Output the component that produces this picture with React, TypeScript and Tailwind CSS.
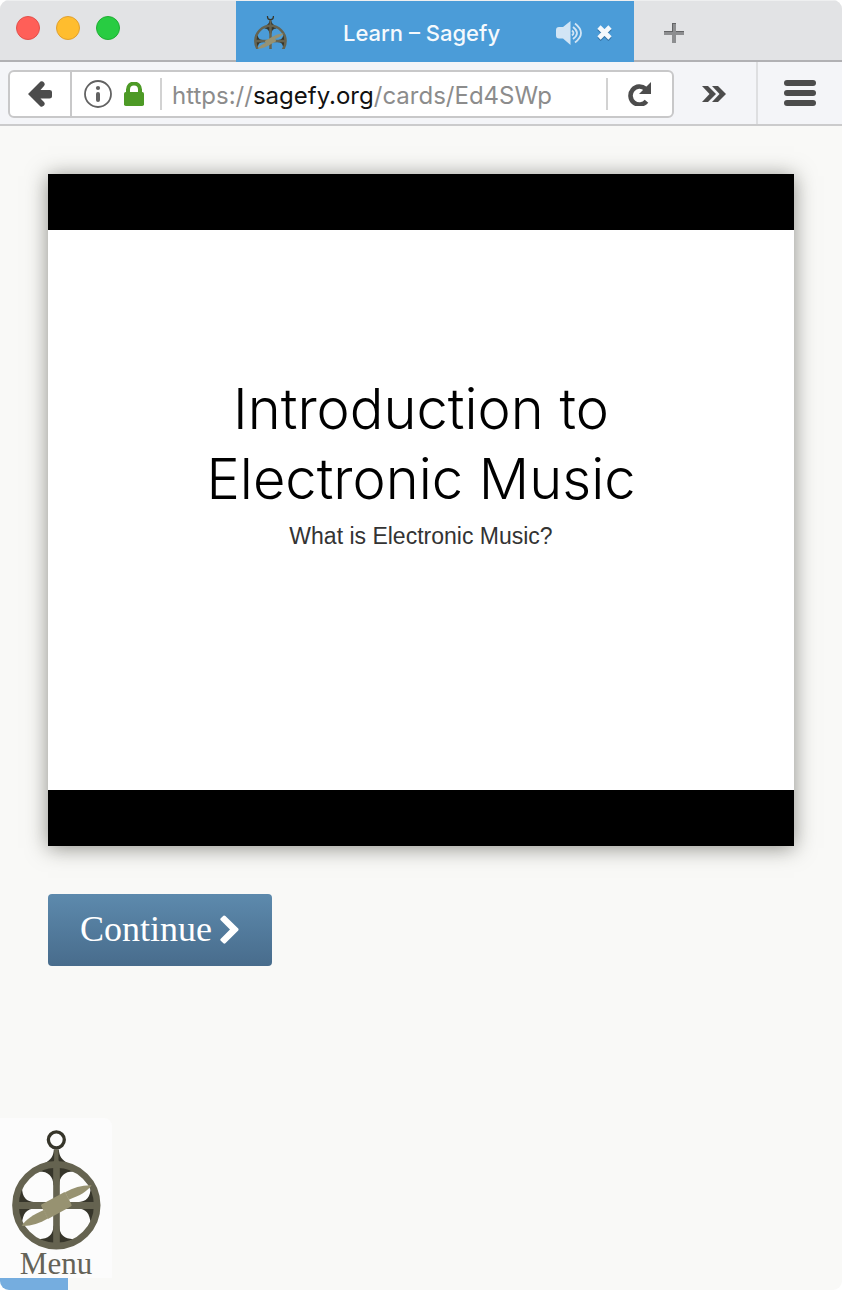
import React from "react";

function Astrolabe({ viewBox, className }: { viewBox: string; className: string }) {
  return (
    <svg viewBox={viewBox} className={className} aria-hidden="true">
      <circle cx="169.5" cy="89" r="24" fill="none" stroke="#36352a" strokeWidth="10" />
      <path d="M162 118 H177 C178 138 186 150 206 160 H133 C153 150 161 138 162 118Z" fill="#36352a" />
      <g fill="#36352a">
        <path d="M118 184 C145 184 160 198 161 226 L178 226 C179 198 194 184 221 184 L169 158Z" />
        <path d="M118 388 C145 388 160 375 161 348 L178 348 C179 375 194 388 221 388 L169 414Z" />
        <path d="M66 232 C67 262 78 276 106 277 L106 296 C80 297 69 310 66 342 L46 286Z" />
        <path d="M273 232 C272 262 261 276 233 277 L233 296 C259 297 270 310 273 342 L293 286Z" />
      </g>
      <path d="M163 118 H176 V150 L180 160 V410 H160 V160 L163 150Z" fill="#656350" />
      <path d="M50 276 H290 V297 H50Z" fill="#656350" />
      <circle cx="169.5" cy="286" r="123" fill="none" stroke="#656350" strokeWidth="20" />
      <g fill="#979271">
        <path d="M65 348 C78 328 100 314 132 300 L144 326 C118 342 92 349 65 348Z" />
        <path d="M196 247 C222 233 248 225 276 226 C264 243 240 258 207 269Z" />
        <path d="M126 283 L193 247 Q196 246 198 249 L215 284 Q217 288 213 290 L147 326 Q144 328 142 324 L124 288 Q122 285 126 283Z" />
      </g>
      <path d="M132 300 L144 326 M196 247 L207 269" stroke="#a8a483" strokeWidth="1.5" strokeDasharray="4 3" />
    </svg>
  );
}

function TabStrip() {
  return (
    <header className="flex h-[62px] items-stretch border-t border-[#eeeff0] bg-[#e2e3e5] font-['Inter','Liberation_Sans',sans-serif]">
      <div className="flex w-[236px] shrink-0 gap-4 border-b-2 border-[#b1b1b4] pt-[15px] pl-4">
        <button aria-label="Close window" className="size-6 rounded-full border border-[#e2504b] bg-[#ff5f58]" />
        <button aria-label="Minimize window" className="size-6 rounded-full border border-[#e0a02f] bg-[#ffbd2e]" />
        <button aria-label="Zoom window" className="size-6 rounded-full border border-[#1fae33] bg-[#28cc42]" />
      </div>
      <div className="flex min-w-0 flex-1 items-center bg-[#4b9cd8] pt-0.5 pr-[22px] pl-[18px]">
        <Astrolabe viewBox="36 83 268 268" className="size-[33px] shrink-0" />
        <span className="flex-1 truncate text-center text-[22px] leading-7 font-medium text-[#f5f9fd]">
          Learn – Sagefy
        </span>
        <button aria-label="Mute tab">
          <svg viewBox="0 0 27 24" className="h-6 w-[27px]" fill="none" stroke="#d2e5f5" strokeWidth="1.8">
            <path d="M3 6 H7 L14.5 0 V24 L7 17.5 H3 Q0 17.5 0 14.500 V9 Q0 6 3 6Z" fill="#d2e5f5" stroke="none" />
            <path d="M16 9.500 Q19 12 16 14.500" />
            <path d="M17 6 Q25 12 17 18" />
            <path d="M19 2.500 Q31 12 19 21.500" />
          </svg>
        </button>
        <button aria-label="Close tab" className="ml-3.5">
          <svg viewBox="0 0 15 16" className="h-4 w-[15px]" fill="none" strokeWidth="4.600">
            <path d="M2 3.500 L13 14.500 M13 3.500 L2 14.500" stroke="#3474a8" />
            <path d="M2 2 L13 13 M13 2 L2 13" stroke="#f4f8fc" />
          </svg>
        </button>
      </div>
      <div className="flex w-[208px] shrink-0 items-center border-b-2 border-[#b1b1b4] pt-1 pl-[30px]">
        <button aria-label="New tab">
          <svg viewBox="0 0 20 20" className="size-5">
            <path d="M8 0 H12 V8 H20 V12 H12 V20 H8 V12 H0 V8 H8Z" fill="#8d8e90" />
            <path d="M8 0 H12 V1 H9 V9 H0 V8 H8Z M12 8 H20 V9 H12Z" fill="#636466" />
          </svg>
        </button>
      </div>
    </header>
  );
}

function NavBar() {
  return (
    <nav className="flex border-b-2 border-[#cbcbcc] bg-[#f4f5f8] font-['Inter','Liberation_Sans',sans-serif]">
      <div className="mt-2 mb-1.5 ml-2 flex h-12 min-w-0 flex-1 items-stretch rounded-md border-2 border-[#c8c8c9] bg-white">
        <button aria-label="Back" className="flex w-[62px] items-center justify-center border-r-2 border-[#c8c8c9]">
          <svg viewBox="0 0 24 26" className="h-[26px] w-6">
            <path
              d="M0 13 L12.500 .6 Q14.500 -.2 16 1.500 Q17.500 3.300 16 5 L12.500 9 H21.500 Q24 9 24 11 V15.500 Q24 17.500 21.500 17.500 H12.500 L16 21 Q17.500 22.800 16 24.500 Q14.500 26.200 12.500 25.400Z"
              fill="#4c4c4c"
            />
          </svg>
        </button>
        <button aria-label="Site information" className="ml-3">
          <svg viewBox="0 0 28 28" className="size-7">
            <circle cx="14" cy="14" r="13" fill="none" stroke="#626262" strokeWidth="1.8" />
            <circle cx="14" cy="8" r="2.100" fill="#626262" />
            <rect x="12" y="12" width="4" height="10" rx="2" fill="#626262" />
          </svg>
        </button>
        <button aria-label="Secure connection" className="ml-3">
          <svg viewBox="0 0 20 24" className="h-6 w-5">
            <path d="M4 12 V7.500 A6 6 0 0 1 16 7.500 V12" fill="none" stroke="#4d9a26" strokeWidth="4" />
            <rect x="0" y="10" width="20" height="14" rx="1.800" fill="#4d9a26" />
          </svg>
        </button>
        <div
          role="textbox"
          aria-label="Address"
          contentEditable
          suppressContentEditableWarning
          className="my-1.5 ml-4 min-w-0 flex-1 overflow-hidden border-x-2 border-[#d2d2d2] pl-2.5 text-2xl leading-9 whitespace-nowrap text-[#8c8c8c] outline-none"
        >
          https://<span className="text-[#111]">sagefy.org</span>/cards/Ed4SWp
        </div>
        <button aria-label="Reload" className="flex w-16 items-center justify-center">
          <svg viewBox="0 0 24 24" className="size-6">
            <path d="M18.500 19.200 A9 9 0 1 1 17.500 6.800" fill="none" stroke="#4c4c4c" strokeWidth="4.600" />
            <path d="M23 0 V12 H11Z" fill="#4c4c4c" />
          </svg>
        </button>
      </div>
      <button aria-label="More tools" className="flex w-[84px] items-center justify-center border-r-2 border-[#dedfe1] pt-0.5 pr-0.5">
        <svg viewBox="0 0 24 18" className="h-[18px] w-6" fill="#4c4c4c">
          <path d="M0 1 H6 L14 9 L6 17 H0 L7.500 9Z" />
          <path d="M10 1 H16 L24 9 L16 17 H10 L17.500 9Z" />
        </svg>
      </button>
      <button aria-label="Open menu" className="flex w-[84px] flex-col items-center justify-center gap-1">
        <span className="h-1.5 w-8 rounded-full bg-[#4c4c4c]" />
        <span className="h-1.5 w-8 rounded-full bg-[#4c4c4c]" />
        <span className="h-1.5 w-8 rounded-full bg-[#4c4c4c]" />
      </button>
    </nav>
  );
}

function VideoCard() {
  return (
    <section className="aspect-[746/672] bg-black py-14 shadow-[0_2px_20px_rgba(50,50,40,0.55)]">
      <div className="flex h-full flex-col items-center bg-white pt-36 text-center">
        <h1 className="font-['Inter','Liberation_Sans',sans-serif] text-[56px] leading-[70px] font-light text-black">
          Introduction to
          <br />
          Electronic Music
        </h1>
        <p className="mt-1.5 font-['Liberation_Sans',sans-serif] text-[23px] leading-8 text-[#333]">
          What is Electronic Music?
        </p>
      </div>
    </section>
  );
}

export default function App() {
  return (
    <div className="min-h-screen bg-white">
      <div className="flex min-h-screen flex-col overflow-hidden rounded-[9px] bg-[#f9f9f7]">
        <TabStrip />
        <NavBar />
        <main className="p-12">
          <VideoCard />
          <button className="mt-12 flex h-[72px] items-center gap-2 rounded bg-linear-to-b from-[#5d8aad] to-[#486c8c] pr-[33px] pb-0.5 pl-8 font-['Liberation_Serif',serif] text-4xl text-white">
            Continue
            <svg viewBox="567 101 57 88" className="h-[29px] w-[19px]" aria-hidden="true">
              <path
                d="M569 111 L577 103 Q580 101 583 104 L622 142 Q624 145 622 148 L583 187 Q580 189 577 187 L569 179 Q566 176 569 173 L597 145 L569 117 Q566 114 569 111Z"
                fill="#fff"
              />
            </svg>
          </button>
        </main>
        <footer className="mt-auto flex flex-col items-start">
          <button className="flex w-28 flex-col items-center rounded-tr-lg bg-[#fcfcfc] pt-3 font-['Liberation_Serif',serif] text-[31px] leading-7 text-[#656358]">
            <Astrolabe viewBox="36 60 268 360" className="h-[120px] w-[89px]" />
            Menu
          </button>
          <div className="h-3 w-[68px] bg-[#75addf]" />
        </footer>
      </div>
    </div>
  );
}
